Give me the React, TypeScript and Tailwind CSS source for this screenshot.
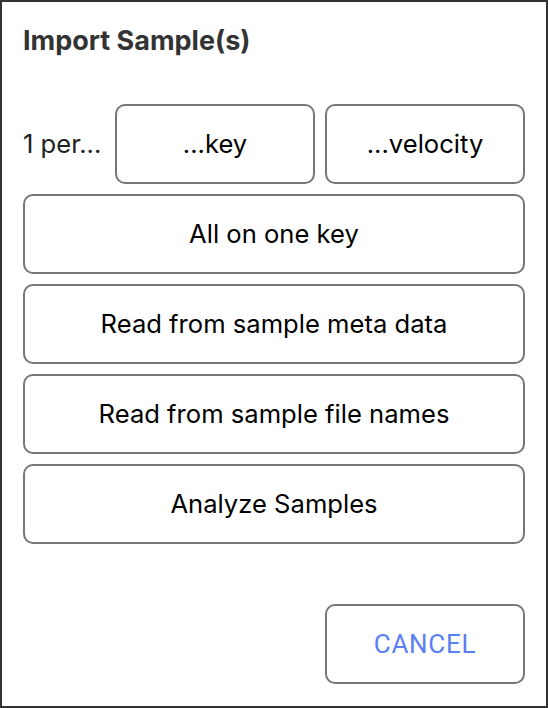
import React from "react";

const btn =
  "flex items-center justify-center rounded-[10px] border-2 border-[#777777] bg-white text-[25.6px] text-black";

export default function App() {
  return (
    <div
      className="flex h-[708px] w-[548px] flex-col border-2 border-[#333333] bg-white px-[21px] pt-[24px]"
      style={{ fontFamily: "Inter, 'Noto Sans', sans-serif" }}
    >
      <div className="h-[30px] text-[27px] font-bold leading-[30px] text-[#333333]">Import Sample(s)</div>
      <div className="mt-[48px] flex flex-col gap-[10px]">
        <div className="flex items-center gap-[10px]">
          <div className="w-[82px] whitespace-nowrap text-[25.6px] text-[#222222]">1 per...</div>
          <button className={`${btn} h-[80px] w-[200px]`}>...key</button>
          <button className={`${btn} h-[80px] w-[200px]`}>...velocity</button>
        </div>
        <button className={`${btn} h-[80px] w-[502px]`}>All on one key</button>
        <button className={`${btn} h-[80px] w-[502px]`}>Read from sample meta data</button>
        <button className={`${btn} h-[80px] w-[502px]`}>Read from sample file names</button>
        <button className={`${btn} h-[80px] w-[502px]`}>Analyze Samples</button>
      </div>
      <div className="mt-[60px] flex justify-end">
        <button
          className="flex h-[80px] w-[200px] items-center justify-center rounded-[10px] border-2 border-[#777777] bg-white text-[26px] tracking-[0.7px] text-[#5b7ff6]"
          style={{ fontFamily: "Roboto, sans-serif" }}
        >
          CANCEL
        </button>
      </div>
    </div>
  );
}
